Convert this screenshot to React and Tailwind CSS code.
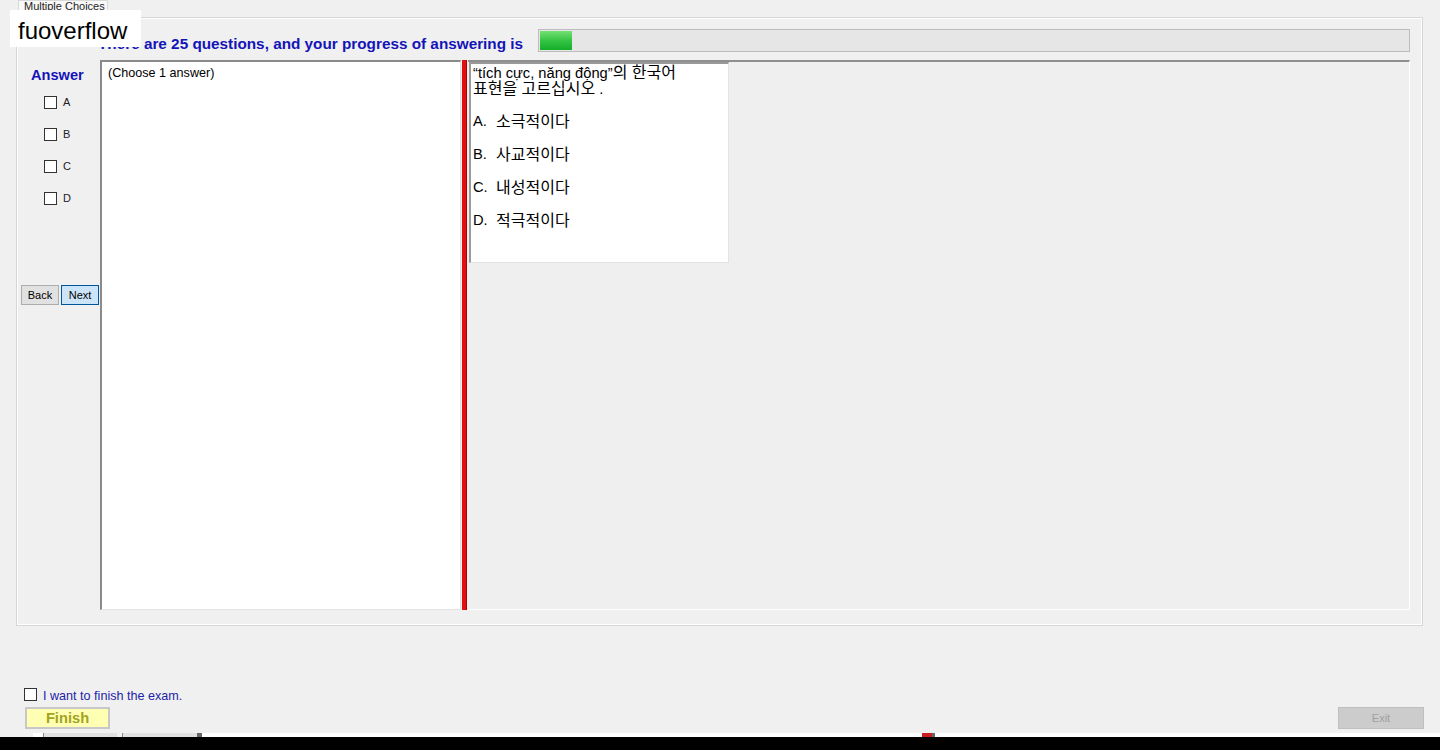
import React from 'react';

// Exam screen - multiple choice
const answers = ['A', 'B', 'C', 'D'];
const options = [
  { key: 'A.', text: '소극적이다' },
  { key: 'B.', text: '사교적이다' },
  { key: 'C.', text: '내성적이다' },
  { key: 'D.', text: '적극적이다' },
];

const Box = () => (
  <div className="w-[13px] h-[13px] border border-[#333333] bg-white shrink-0" />
);

const App = () => {
  return (
    <div
      className="relative w-[1440px] h-[750px] bg-[#f0f0f0] flex flex-col overflow-hidden"
      style={{ fontFamily: '"Liberation Sans", Arial, "Noto Sans CJK KR", sans-serif' }}
    >
      {/* watermark */}
      <div className="absolute left-[10px] top-[10px] w-[131px] h-[37px] bg-white z-10 flex items-center pl-[8px] pt-[4px]">
        <span className="text-[24px] leading-none text-black">fuoverflow</span>
      </div>

      {/* tab header */}
      <div className="h-[17px] flex">
        <div className="ml-[18px] w-[90px] h-[17px] bg-[#f9f9f9] border border-b-0 border-[#d9d9d9] text-[11px] leading-[11px] text-[#222] pl-[5px]">
          Multiple Choices
        </div>
      </div>

      {/* tab page */}
      <div className="ml-[16px] w-[1407px] h-[609px] border border-[#d6d6d6] shadow-[inset_1px_1px_0_#ffffff,inset_-1px_-1px_0_#ffffff] pt-[11px] pl-[4px] pr-[12px] flex flex-col">
        {/* header row */}
        <div className="h-[23px] flex">
          <div className="ml-[77px] w-[424px] flex items-end">
            <span className="text-[15.3px] font-bold text-[#1414b8] leading-[16px] whitespace-nowrap">
              There are 25 questions, and your progress of answering is
            </span>
          </div>
          <div className="ml-[16px] flex-1 h-[23px] border border-[#bcbcbc] bg-[#e6e6e6] p-[1px]">
            <div className="w-[32px] h-full bg-gradient-to-b from-[#72e072] via-[#34c444] to-[#12ae28]" />
          </div>
        </div>

        {/* main row */}
        <div className="mt-[8px] h-[550px] flex">
          {/* answer column */}
          <div className="w-[79px] flex flex-col">
            <div className="mt-[7px] pl-[10px] h-[16px] text-[14.6px] font-bold text-[#1414b8] leading-[16px]">
              Answer
            </div>
            <div className="mt-[13px] flex flex-col">
              {answers.map((a) => (
                <div key={a} className="h-[32px] flex items-start pl-[23px]">
                  <Box />
                  <span className="ml-[6px] text-[11px] leading-[13px] text-[#222]">{a}</span>
                </div>
              ))}
            </div>
            <div className="mt-[61px] flex gap-[2px]">
              <button className="w-[38px] h-[20px] bg-[#e1e1e1] border border-[#adadad] text-[11px] text-black leading-none">
                Back
              </button>
              <button className="w-[38px] h-[20px] bg-[#cce4f7] border border-[#005499] text-[11px] text-black leading-none">
                Next
              </button>
            </div>
          </div>

          {/* answer text area */}
          <div className="w-[361px] h-full bg-white border-t-2 border-l-2 border-t-[#8a8a8a] border-l-[#8a8a8a] border-r border-b border-r-[#e3e3e3] border-b-[#e3e3e3] pl-[6px] pt-[4px]">
            <div className="text-[12.6px] leading-[14px] text-black">(Choose 1 answer)</div>
          </div>

          {/* splitter */}
          <div className="w-[7px] h-full flex">
            <div className="ml-[1px] w-[5px] h-full bg-[#e01010] border-r border-[#b00000]" />
          </div>

          {/* question panel */}
          <div className="flex-1 h-full bg-[#efefef] border-t-2 border-t-[#8f8f8f] border-r border-r-white border-b border-b-white">
            <div className="ml-[1px] w-[260px] h-[201px] bg-white border-t-2 border-l-2 border-t-[#9a9a9a] border-l-[#9a9a9a] border-r border-b border-r-[#e3e3e3] border-b-[#e3e3e3] pl-[2px] pt-[1px] text-[14.7px] text-black">
              <div className="leading-[15px] whitespace-nowrap">
                “tích cực, năng động”<span className="text-[16px]">의 한국어</span>
              </div>
              <div className="leading-[15px] whitespace-nowrap">
                <span className="text-[16px]">표현을 고르십시오</span> .
              </div>
              <div className="mt-[8px]">
                {options.map((o) => (
                  <div key={o.key} className="leading-[33px] flex">
                    <span className="w-[23px]">{o.key}</span>
                    <span className="text-[16px]">{o.text}</span>
                  </div>
                ))}
              </div>
            </div>
          </div>
        </div>
      </div>

      {/* finish area */}
      <div className="mt-[62px] pl-[24px] flex items-center h-[13px]">
        <Box />
        <span className="ml-[6px] mt-[3px] text-[12.6px] leading-[14px] text-[#2323a8]">I want to finish the exam.</span>
      </div>
      <div className="mt-[6px] pl-[25px] pr-[16px] flex justify-between">
        <button className="w-[85px] h-[22px] bg-[#ffffb4] border-2 border-[#c8c8c8] text-[14.7px] font-bold text-[#a3a31e] leading-none">
          Finish
        </button>
        <button className="w-[86px] h-[22px] bg-[#cccccc] border border-[#bfbfbf] text-[11px] text-[#a0a0a0] leading-none">
          Exit
        </button>
      </div>

      {/* bottom strip */}
      <div className="mt-[4px] h-[4px] flex">
        <div className="w-[33px] bg-[#f0f0f0]" />
        <div className="w-[10px] bg-white" />
        <div className="w-[74px] bg-[#e0e0e0] border-l border-[#888]" />
        <div className="w-[5px] bg-[#f0f0f0]" />
        <div className="w-[75px] bg-[#e0e0e0] border-l border-[#888]" />
        <div className="w-[5px] bg-[#666]" />
        <div className="w-[720px] bg-white" />
        <div className="w-[10px] bg-[#c81e1e]" />
        <div className="w-[3px] bg-[#666]" />
        <div className="flex-1 bg-white" />
      </div>
      <div className="flex-1 bg-black" />
    </div>
  );
};

export default App;
